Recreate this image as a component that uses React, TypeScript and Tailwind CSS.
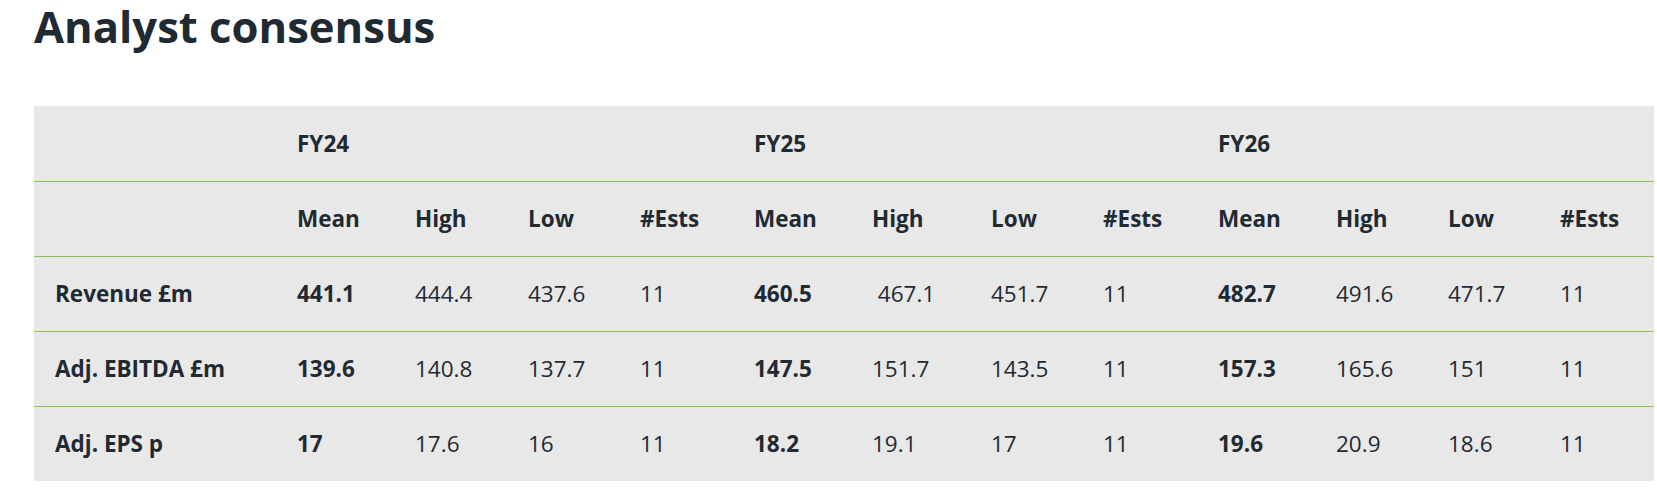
import React from "react";

const cols = "grid grid-cols-[242px_118px_113px_112px_114px_118px_119px_112px_115px_118px_112px_112px_115px]";
const cell = "pl-[21px] flex items-center whitespace-nowrap";

const subHeads = ["Mean", "High", "Low", "#Ests"];

const rows: { label: string; vals: string[][] }[] = [
  {
    label: "Revenue £m",
    vals: [
      ["441.1", "444.4", "437.6", "11"],
      ["460.5", "\u00a0467.1", "451.7", "11"],
      ["482.7", "491.6", "471.7", "11"],
    ],
  },
  {
    label: "Adj. EBITDA £m",
    vals: [
      ["139.6", "140.8", "137.7", "11"],
      ["147.5", "151.7", "143.5", "11"],
      ["157.3", "165.6", "151", "11"],
    ],
  },
  {
    label: "Adj. EPS p",
    vals: [
      ["17", "17.6", "16", "11"],
      ["18.2", "19.1", "17", "11"],
      ["19.6", "20.9", "18.6", "11"],
    ],
  },
];

export default function App() {
  return (
    <div className="bg-white min-h-[493px] w-[1657px] overflow-hidden font-['Open_Sans',sans-serif] text-[#1f2a33]">
      <h1 className="pl-[34px] text-[43.6px] leading-[52px] font-bold">Analyst consensus</h1>
      <div className="ml-[34px] mt-[54px] w-[1620px] bg-[#e8e8e8] text-[22.5px]">
        <div className={`${cols} h-[76px] border-b border-[#8cc04a] font-bold`}>
          <div className={cell}></div>
          <div className={`${cell} col-span-4`}>FY24</div>
          <div className={`${cell} col-span-4`}>FY25</div>
          <div className={`${cell} col-span-4`}>FY26</div>
        </div>
        <div className={`${cols} h-[75px] border-b border-[#8cc04a] font-bold`}>
          <div className={cell}></div>
          {[0, 1, 2].map((g) =>
            subHeads.map((h) => (
              <div key={`${g}-${h}`} className={cell}>
                {h}
              </div>
            ))
          )}
        </div>
        {rows.map((r, i) => (
          <div
            key={r.label}
            className={`${cols} ${i < rows.length - 1 ? "h-[75px] border-b border-[#8cc04a]" : "h-[74px]"}`}
          >
            <div className={`${cell} font-bold`}>{r.label}</div>
            {r.vals.map((g, gi) =>
              g.map((v, vi) => (
                <div key={`${gi}-${vi}`} className={`${cell} ${vi === 0 ? "font-bold" : "font-normal"}`}>
                  {v}
                </div>
              ))
            )}
          </div>
        ))}
      </div>
    </div>
  );
}
